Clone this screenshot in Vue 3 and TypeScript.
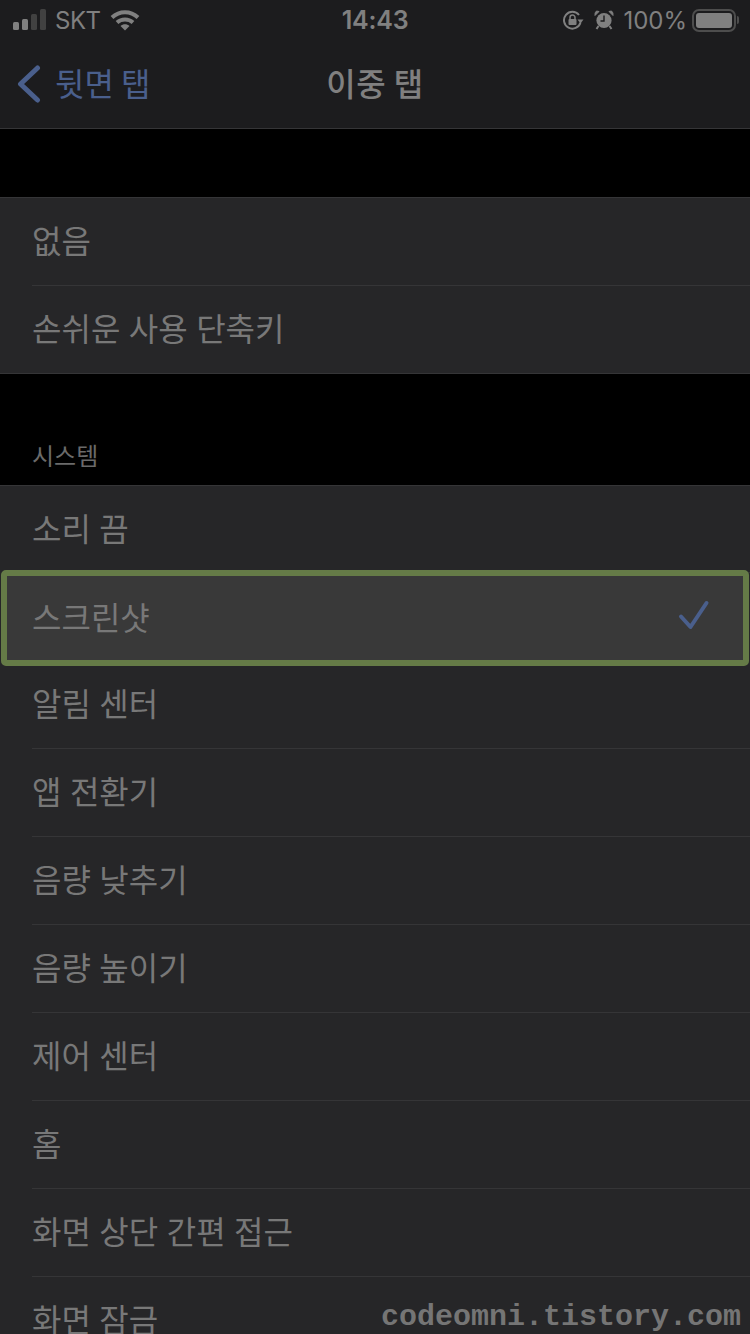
<script setup lang="ts">
const firstGroup: string[] = ['없음', '손쉬운 사용 단축키']
const systemGroup: { label: string; selected?: boolean }[] = [
  { label: '소리 끔' },
  { label: '스크린샷', selected: true },
  { label: '알림 센터' },
  { label: '앱 전환기' },
  { label: '음량 낮추기' },
  { label: '음량 높이기' },
  { label: '제어 센터' },
  { label: '홈' },
  { label: '화면 상단 간편 접근' },
  { label: '화면 잠금' },
]
</script>

<template>
  <div class="screen">
    <header class="top">
      <div class="status">
        <div class="status-left">
          <svg class="signal" width="33" height="22" viewBox="0 0 33 22">
            <rect x="0" y="13" width="6" height="8" rx="1.5" fill="#808080" />
            <rect x="9" y="10" width="6" height="11" rx="1.5" fill="#808080" />
            <rect x="18" y="5" width="6" height="16" rx="1.5" fill="#414141" />
            <rect x="27" y="0" width="6" height="21" rx="1.5" fill="#414141" />
          </svg>
          <span class="carrier">SKT</span>
          <svg class="wifi" width="30" height="22" viewBox="0 0 30 22">
            <path d="M2 8.5C9.5 1.5 20.5 1.5 28 8.5" fill="none" stroke="#808080" stroke-width="4" />
            <path d="M7 13.5C11.5 9.5 18.5 9.5 23 13.5" fill="none" stroke="#808080" stroke-width="4" />
            <path d="M10.5 17 15 21.5 19.5 17C17 14.8 13 14.8 10.5 17Z" fill="#808080" />
          </svg>
        </div>
        <div class="clock">14:43</div>
        <div class="status-right">
          <svg class="lock" width="22" height="20" viewBox="0 0 22 20">
            <path d="M18.5 12.5A8.4 8.4 0 1 1 17 5" fill="none" stroke="#808080" stroke-width="2" />
            <path d="M15.5 9.5h6l-3 4Z" fill="#808080" />
            <rect x="6.5" y="9" width="8" height="6" rx="1" fill="#808080" />
            <path d="M8 9.5V7.6a2.5 2.5 0 0 1 5 0V9.5" fill="none" stroke="#808080" stroke-width="1.5" />
          </svg>
          <svg class="alarm" width="20" height="20" viewBox="0 0 20 20">
            <circle cx="10" cy="10.5" r="7.6" fill="#808080" />
            <path d="M1 5.5 5 1.5 2.5 1Q.5 2.5 1 5.5ZM19 5.5 15 1.5 17.5 1Q19.5 2.5 19 5.5Z" fill="#808080" stroke="#808080" />
            <path d="M4.5 16 2.5 19M15.5 16 17.5 19" stroke="#808080" stroke-width="2" />
            <path d="M10 5.5V11H6.5" fill="none" stroke="#1c1c1e" stroke-width="1.4" />
          </svg>
          <span class="percent">100%</span>
          <div class="battery"><div class="battery-fill"></div></div>
          <div class="battery-nub"></div>
        </div>
      </div>
      <nav class="nav">
        <div class="back">
          <svg width="24" height="38" viewBox="0 0 24 38">
            <path d="M20.5 3 3.5 19 20.5 35" fill="none" stroke="#4a5f8c" stroke-width="5" stroke-linecap="round" stroke-linejoin="round" />
          </svg>
          <span class="nav-text">뒷면 탭</span>
        </div>
        <div class="title">이중 탭</div>
      </nav>
    </header>

    <div class="gap-first"></div>
    <section class="group">
      <div v-for="item in firstGroup" :key="item" class="row"><div class="row-inner">{{ item }}</div></div>
    </section>

    <div class="section-head">시스템</div>
    <section class="group system">
      <div
        v-for="item in systemGroup"
        :key="item.label"
        class="row"
        :class="{ selected: item.selected }"
      >
        <div class="row-inner">
          <span>{{ item.label }}</span>
          <svg v-if="item.selected" class="check" width="32" height="32" viewBox="0 0 32 32">
            <path d="M3 16.5 12.5 27 28.5 3" fill="none" stroke="#4a5f8c" stroke-width="4" stroke-linecap="round" stroke-linejoin="round" />
          </svg>
        </div>
      </div>
    </section>
    <div class="watermark">codeomni.tistory.com</div>
  </div>
</template>

<style>
html, body { margin: 0; background: #000; }
</style>

<style scoped>
.screen {
  position: relative;
  width: 750px;
  height: 1334px;
  overflow: hidden;
  background: #000;
  color: #787878;
  font-family: "Noto Sans CJK KR", "Liberation Sans", sans-serif;
}
.top {
  height: 128px;
  background: #1c1c1e;
  border-bottom: 1px solid #353537;
}
.status {
  height: 40px;
  display: grid;
  grid-template-columns: 1fr auto 1fr;
  align-items: center;
  font-family: Inter, "Liberation Sans", sans-serif;
  font-size: 24px;
  color: #808080;
}
.status-left { display: flex; align-items: center; padding-left: 13px; }
.signal { margin-right: 9px; }
.carrier { margin-right: 9px; letter-spacing: -0.5px; }
.clock { font-weight: 600; font-size: 25px; letter-spacing: -0.2px; }
.status-right { display: flex; align-items: center; justify-content: flex-end; padding-right: 11px; }
.lock { margin-right: 10px; }
.alarm { margin-right: 9px; }
.percent { margin-right: 5px; }
.battery {
  box-sizing: border-box;
  width: 44px;
  height: 23px;
  border: 2px solid #4d4d4d;
  border-radius: 7px;
  padding: 2px;
}
.battery-fill { height: 100%; background: #808080; border-radius: 3px; }
.battery-nub { width: 2px; height: 8px; margin-left: 1px; background: #4d4d4d; border-radius: 0 2px 2px 0; }
.nav {
  height: 88px;
  display: grid;
  grid-template-columns: 1fr auto 1fr;
  align-items: center;
}
.back {
  grid-column: 1;
  grid-row: 1;
  display: flex;
  align-items: center;
  gap: 14px;
  padding-left: 17px;
  color: #4a5f8c;
  font-size: 32px;
}
.nav-text { padding-bottom: 4px; }
.title {
  grid-column: 2;
  grid-row: 1;
  padding-bottom: 4px;
  font-size: 32px;
  font-weight: 500;
  letter-spacing: 0.5px;
  color: #808080;
}
.gap-first { height: 68px; }
.group {
  background: #262628;
  border-top: 1px solid #353537;
  border-bottom: 1px solid #353537;
}
.section-head {
  height: 111px;
  box-sizing: border-box;
  padding: 66px 0 0 32px;
  font-size: 24px;
  line-height: 30px;
  color: #6a6a6a;
}
.row { padding-left: 32px; }
.row-inner {
  box-sizing: border-box;
  height: 88px;
  padding-bottom: 5px;
  display: flex;
  align-items: center;
  justify-content: space-between;
  border-bottom: 1px solid #353537;
  font-size: 32px;
  word-spacing: 1.3px;
}
.row:last-child .row-inner { height: 87px; border-bottom: 0; }
.system .row:first-child .row-inner { height: 87px; }
.selected {
  position: relative;
  z-index: 1;
  box-sizing: border-box;
  height: 96px;
  margin: -3px 1px -5px;
  padding-left: 25px;
  background: #393939;
  border: 6px solid #657b47;
  border-radius: 5px;
}
.selected .row-inner {
  height: 84px;
  border-bottom: 0;
  padding-right: 33px;
}
.watermark {
  position: absolute;
  right: 9px;
  bottom: -2px;
  font-family: "Liberation Mono", monospace;
  font-weight: 700;
  font-size: 30px;
  line-height: 38px;
  color: #757575;
}
</style>
